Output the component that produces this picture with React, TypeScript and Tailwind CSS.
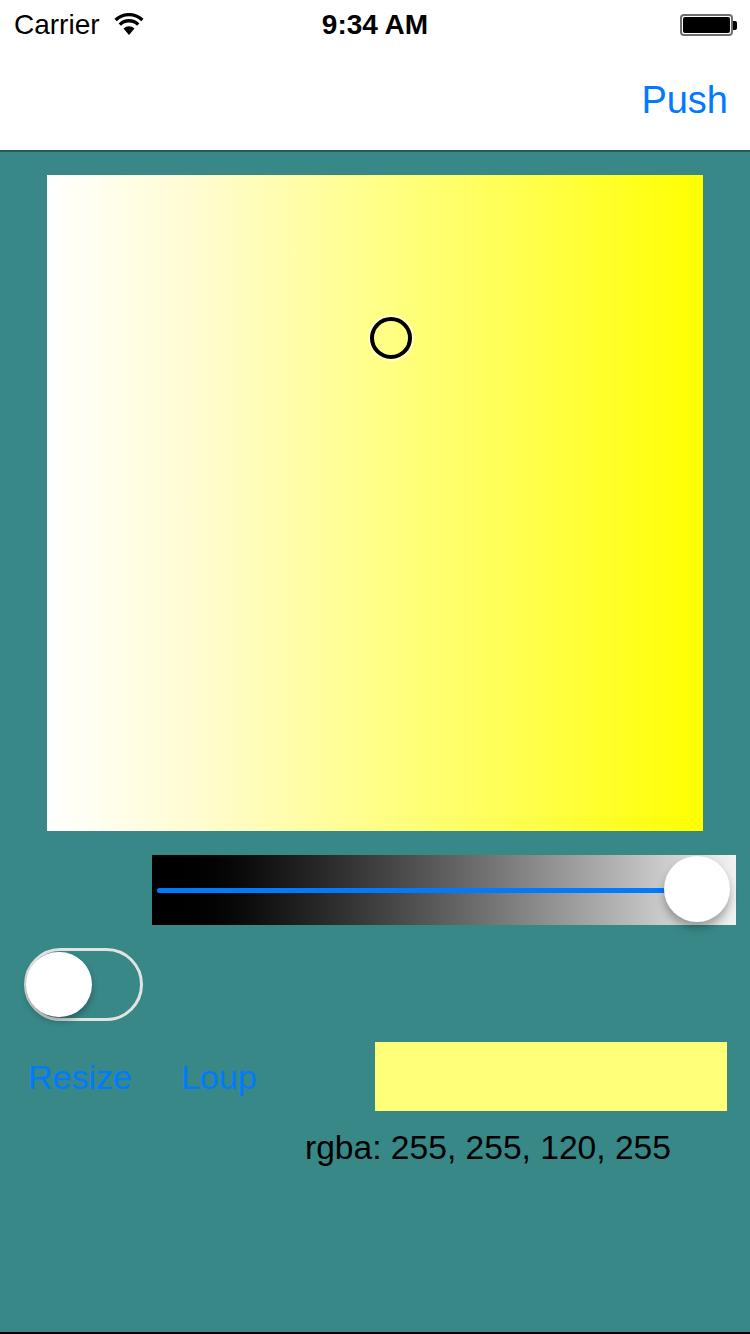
import React from "react";

const font = { fontFamily: '"Liberation Sans", Arial, sans-serif' };

function Wifi() {
  return (
    <svg width="30" height="22" viewBox="0 0 30 22">
      <path d="M15 22 L9.5 15.5 A8 8 0 0 1 20.5 15.5 Z" fill="#000" />
      <path d="M5.8 11.6 A13 13 0 0 1 24.2 11.6" stroke="#000" strokeWidth="3.4" fill="none" />
      <path d="M1.6 7 A19.5 19.5 0 0 1 28.4 7" stroke="#000" strokeWidth="3.4" fill="none" />
    </svg>
  );
}

function Battery() {
  return (
    <div className="flex items-center">
      <div className="w-[53px] h-[22px] rounded-[4px] border-[2px] border-[#6e6e6e] p-[1px] bg-white">
        <div className="w-full h-full rounded-[2px] bg-black" />
      </div>
      <div className="w-[4px] h-[9px] bg-black rounded-r-[2px]" />
    </div>
  );
}

export default function App() {
  return (
    <div className="w-[750px] h-[1334px] bg-[#388888] flex flex-col overflow-hidden border-b-[2px] border-black" style={font}>
      <div className="bg-white h-[152px] flex flex-col border-b-[2px] border-[#255a5a]">
        <div className="h-[50px] flex items-center relative px-[14px]">
          <span className="text-[28px] leading-none text-black">Carrier</span>
          <span className="ml-[14px] mt-[-2px]"><Wifi /></span>
          <span className="absolute left-0 right-0 text-center text-[28px] font-bold leading-none text-black pointer-events-none">9:34 AM</span>
          <div className="ml-auto mr-[-1px]"><Battery /></div>
        </div>
        <div className="flex-1 flex items-center justify-end pr-[22px] pb-[1px]">
          <span className="text-[38px] leading-none text-[#007aff]">Push</span>
        </div>
      </div>

      <div className="ml-[47px] mt-[23px] w-[656px] h-[656px] bg-[linear-gradient(to_right,#ffffff_0%,#fffccc_25%,#ffff88_50%,#ffff48_75%,#ffff00_100%)] relative">
        <div className="absolute left-[323px] top-[142px] w-[42px] h-[42px] rounded-full border-[4px] border-black shadow-[0_0_0_2px_rgba(255,255,255,0.6)]" />
      </div>

      <div className="ml-[152px] mt-[24px] w-[584px] h-[70px] bg-gradient-to-r from-black to-[#f2f2f2] flex items-center relative">
        <div className="ml-[5px] w-[515px] h-[5px] rounded-full bg-[#007aff]" />
        <div className="absolute left-[512px] top-[1px] w-[66px] h-[66px] rounded-full bg-white shadow-[0_6px_8px_rgba(0,0,0,0.3)]" />
      </div>

      <div className="ml-[24px] mt-[23px] w-[119px] h-[73px] rounded-full border-[3px] border-[#e3e3e3] relative">
        <div className="absolute left-[-1px] top-[1px] w-[66px] h-[65px] rounded-full bg-white shadow-[0_4px_6px_rgba(0,0,0,0.3)]" />
      </div>

      <div className="mt-[21px] flex items-center">
        <span className="ml-[28px] text-[34px] leading-none text-[#007aff]">Resize</span>
        <span className="ml-[49px] text-[34px] leading-none text-[#007aff]">Loup</span>
        <div className="ml-auto mr-[23px] w-[352px] h-[69px] bg-[#ffff78]" />
      </div>

      <div className="ml-[305px] mt-[20px] text-[33.6px] leading-none text-black">rgba: 255, 255, 120, 255</div>
    </div>
  );
}
